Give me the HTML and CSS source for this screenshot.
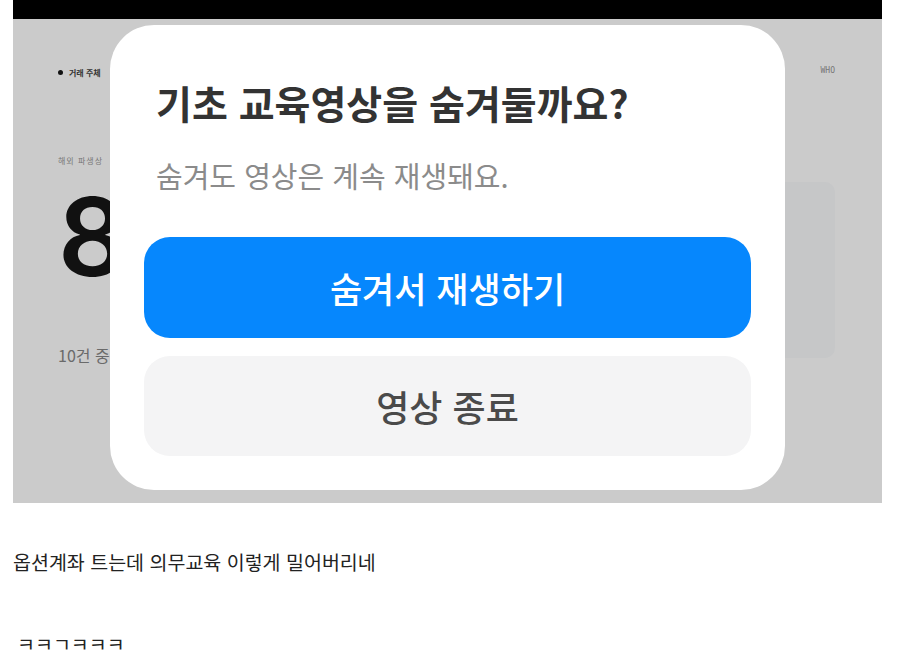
FILE: index.html
```html
<!DOCTYPE html>
<html lang="ko">
<head>
  <meta charset="utf-8">
  <title>기초 교육영상</title>
  <link rel="stylesheet" href="styles.css">
</head>
<body>

  <div class="shot">
    <div class="topbar"></div>
    <div class="screen">
      <div class="top">
        <span class="who-label"><span class="dot"></span>거래 주체</span>
        <span class="who">WHO</span>
      </div>
      <div class="content">
        <div class="left">
          <div class="label">해외 파생상</div>
          <div class="big">8</div>
          <div class="count">10건 중</div>
        </div>
        <div class="card"></div>
      </div>
    </div>

    <div class="modal">
      <h1>기초 교육영상을 숨겨둘까요?</h1>
      <p class="sub">숨겨도 영상은 계속 재생돼요.</p>
      <button class="btn primary">숨겨서 재생하기</button>
      <button class="btn secondary">영상 종료</button>
    </div>
  </div>

  <p class="post">옵션계좌 트는데 의무교육 이렇게 밀어버리네</p>
  <p class="post laugh">ㅋㅋㄱㅋㅋㅋ</p>

</body>
</html>
```

FILE: styles.css
```css
body {
  margin: 0;
  background: white;
  font-family: 'Noto Sans CJK KR', 'Noto Sans', sans-serif;
  color: #222;
}

.shot {
  position: relative;
  margin-left: 13px;
  width: 869px;
  height: 503px;
  overflow: hidden;
}

.topbar {
  height: 19px;
  background: #000;
}

.screen {
  height: 484px;
  background: #cbcbcb;
  padding: 47px 47px 0 45px;
  box-sizing: border-box;
}

.top {
  display: flex;
  justify-content: space-between;
  align-items: center;
  height: 12px;
}

.who-label {
  display: flex;
  align-items: center;
  gap: 6px;
  font-size: 8px;
  font-weight: 700;
  color: #333;
}

.dot {
  width: 5px;
  height: 5px;
  border-radius: 50%;
  background: #111;
}

.who {
  font-family: 'DejaVu Sans Mono', monospace;
  font-size: 8px;
  color: #777;
  margin-top: -4px;
}

.content {
  display: flex;
  justify-content: space-between;
  align-items: flex-start;
}

.left {
  display: flex;
  flex-direction: column;
}

.label {
  margin-top: 77px;
  font-size: 8px;
  line-height: 12px;
  color: #777;
  letter-spacing: 1px;
}

.big {
  margin-top: 4px;
  font-family: 'Inter', sans-serif;
  font-size: 108px;
  line-height: 132px;
  font-weight: 600;
  color: #111;
}

.count {
  margin-top: 42px;
  font-size: 16px;
  line-height: 20px;
  color: #6a6a6a;
}

.card {
  margin-top: 104px;
  width: 380px;
  height: 176px;
  border-radius: 10px;
  background: #c6c7c8;
}

.modal {
  position: absolute;
  left: 97px;
  top: 25px;
  width: 675px;
  height: 465px;
  box-sizing: border-box;
  padding: 53px 34px 34px;
  background: white;
  border-radius: 44px;
  display: flex;
  flex-direction: column;
}

.modal h1 {
  margin: 0;
  padding-left: 12px;
  font-size: 39px;
  line-height: 48px;
  font-weight: 700;
  color: #333;
}

.sub {
  margin: 29px 0 0;
  padding-left: 12px;
  font-size: 29px;
  line-height: 40px;
  color: #8b8b8b;
}

.btn {
  height: 101px;
  border: none;
  border-radius: 26px;
  font-family: inherit;
  font-size: 35px;
  font-weight: 500;
  cursor: pointer;
}

.primary {
  margin-top: 42px;
  background: #0687fd;
  color: white;
}

.secondary {
  margin-top: 18px;
  background: #f4f4f5;
  color: #4a4a4a;
  font-size: 36px;
}

.post {
  margin: 46px 0 0 13px;
  font-size: 19.5px;
  line-height: 26px;
  color: #222;
}

.laugh {
  margin-top: 56px;
  padding-left: 4px;
}
```
